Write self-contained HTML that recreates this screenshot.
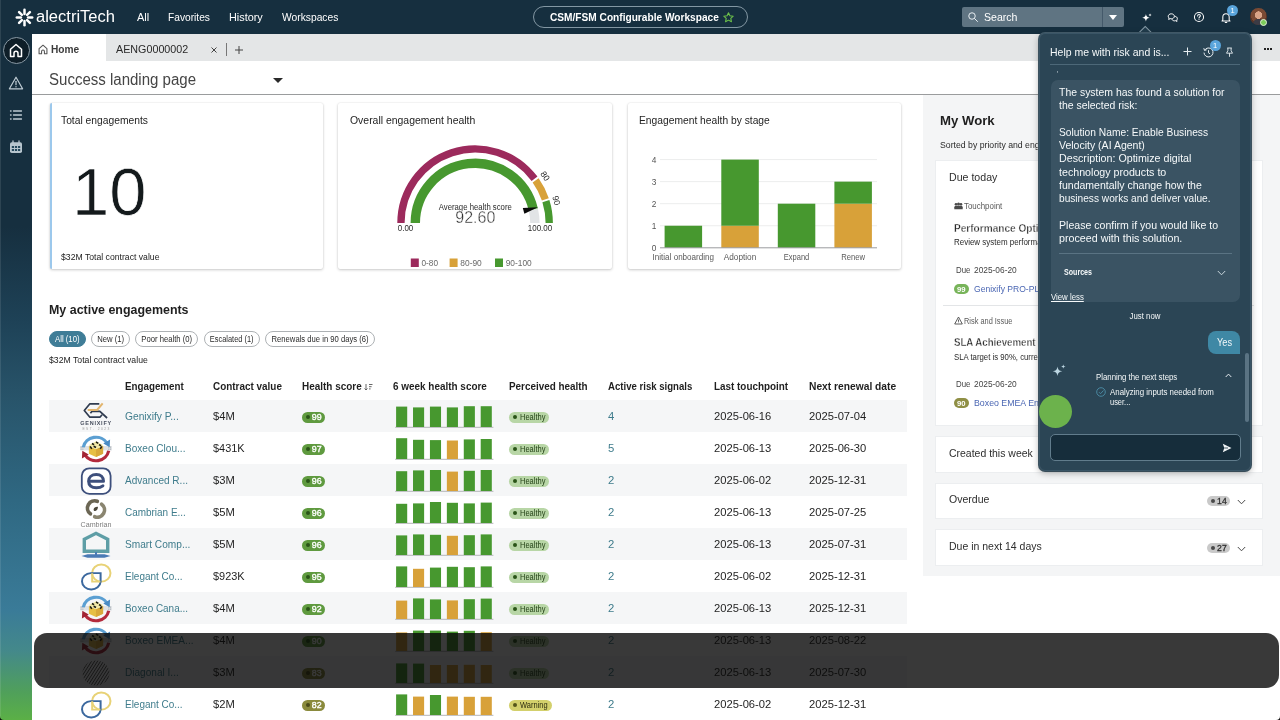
<!DOCTYPE html>
<html lang="en">
<head>
<meta charset="utf-8">
<title>Success landing page - CSM/FSM Configurable Workspace</title>
<style>
*{box-sizing:border-box;margin:0;padding:0}
html,body{width:1280px;height:720px;overflow:hidden;background:#fff}
body{font-family:"Liberation Sans","DejaVu Sans",sans-serif;color:#1c1c1c;position:relative;-webkit-font-smoothing:antialiased}
.abs{position:absolute}
.t{position:absolute;white-space:nowrap;line-height:20px;height:20px}
/* header */
#hdr{position:absolute;left:0;top:0;width:1280px;height:34px;background:#162f3f}
#side{position:absolute;left:0;top:34px;width:32px;height:686px;background:linear-gradient(180deg,#162f3f 0%,#162f3f 28%,#1e4257 42%,#28546a 53%,#2f6882 68%,#3a7b98 84%,#44898a 90%,#50a05a 96%,#5bb046 100%)}
#edge{position:absolute;left:0;top:0;width:1px;height:720px;background:rgba(255,255,255,.1)}
#tabs{position:absolute;left:32px;top:34px;width:1248px;height:27px;background:#e4e6e7}
#hometab{position:absolute;left:32px;top:34px;width:74px;height:27px;background:#fff}
#titlebar{position:absolute;left:32px;top:61px;width:1248px;height:34px;background:#fff;border-bottom:1px solid #9a9c9d}
.nav{color:#fff;font-size:11.5px}
/* cards */
.card{position:absolute;top:103px;width:274px;height:166px;background:#fff;box-shadow:0 1px 3px rgba(0,0,0,.2),0 0 1.5px rgba(0,0,0,.13);border-radius:2px}
.ctitle{position:absolute;font-size:11.5px;color:#1c1c1c;white-space:nowrap;line-height:1}
/* table */
.row{position:absolute;left:49px;width:858px;height:32px}
.row.g{background:#f5f6f7}
.lnk{color:#3f7c8c}
.cell{position:absolute;white-space:nowrap;line-height:1;font-size:11.5px;color:#1c1c1c}
.th{position:absolute;white-space:nowrap;line-height:1;font-size:11.2px;font-weight:bold;color:#1c1c1c;top:381px}
.hs{position:absolute;height:11px;width:23px;border-radius:6px;background:#5f9a3f;color:#fff;font-size:8px;font-weight:bold;line-height:11px;padding-left:11px}
.hs i{position:absolute;left:4px;top:3px;width:5px;height:5px;border-radius:50%;background:#274d17}
.ph{position:absolute;height:11px;border-radius:6px;background:#b9d7a8;color:#1f3d12;font-size:8.3px;line-height:11px;padding-left:12px;white-space:nowrap}
.ph i{position:absolute;left:4px;top:3px;width:5px;height:5px;border-radius:50%;background:#274d17}
.bars{position:absolute;left:346px;top:5px;width:98px;height:22px;border-bottom:1px solid #b9bbbd}
.bars b{position:absolute;bottom:0;width:11px;background:#4a9a2f}
.bars b.o{background:#dfa03a}
.pill{position:absolute;top:331px;height:16px;border:1px solid #adb1b4;border-radius:8px;font-size:8.3px;line-height:13px;color:#1c1c1c;text-align:center;white-space:nowrap;background:#fff}
/* right panel */
#rp{position:absolute;left:922px;top:95px;width:340px;height:483px;background:#f4f5f6}
.rcard{position:absolute;left:935.5px;width:326.5px;background:#fff;box-shadow:0 0 0 1px #eceef0}
/* chat */
#chat{position:absolute;left:1039px;top:33px;width:213px;height:438px;background:#2a4555;border-radius:6px;box-shadow:0 2px 8px rgba(0,0,0,.35);border:1px solid #3a5566}
.cw{color:#f2f5f7}
</style>
</head>
<body>
<div id="app" style="position:absolute;left:0;top:0;width:1280px;height:720px;overflow:hidden;will-change:transform">
<!-- ============ TOP HEADER ============ -->
<div id="hdr"></div>
<svg class="abs" style="left:15.2px;top:7.900px" width="19" height="19" viewBox="-9.5 -9.5 19 19">
<g stroke="#fff" stroke-width="2.500" stroke-linecap="round">
<line x1="0" y1="-3.600" x2="0" y2="-7.700"/><line x1="0" y1="3.600" x2="0" y2="7.700"/>
<line x1="-3.600" y1="0" x2="-7.700" y2="0"/><line x1="3.600" y1="0" x2="7.700" y2="0"/>
<line x1="-2.600" y1="-2.600" x2="-5.400" y2="-5.400"/><line x1="2.600" y1="2.600" x2="5.400" y2="5.400"/>
<line x1="-2.600" y1="2.600" x2="-5.400" y2="5.400"/><line x1="2.600" y1="-2.600" x2="5.400" y2="-5.400"/>
</g></svg>
<div class="t" style="top:7px;font-size:15.8px;left:36.0px;transform-origin:0 50%;transform:scaleX(1.046);color:#fff;">alectriTech</div>
<div class="t" style="top:7px;font-size:10.6px;left:137.3px;transform-origin:0 50%;transform:scaleX(1.036);color:#fff;">All</div>
<div class="t" style="top:7px;font-size:10.6px;left:168.4px;transform-origin:0 50%;transform:scaleX(0.963);color:#fff;">Favorites</div>
<div class="t" style="top:7px;font-size:10.6px;left:229.1px;transform-origin:0 50%;transform:scaleX(1.025);color:#fff;">History</div>
<div class="t" style="top:7px;font-size:10.6px;left:282.2px;transform-origin:0 50%;transform:scaleX(0.970);color:#fff;">Workspaces</div>
<div class="abs" style="left:532.500px;top:6px;width:215px;height:22px;border:1px solid #8397a3;border-radius:11px"></div>
<div class="t" style="top:8px;font-size:10.4px;left:549.5px;transform-origin:0 50%;transform:scaleX(0.976);font-weight:bold;color:#fff;">CSM/FSM Configurable Workspace</div>
<svg class="abs" style="left:722px;top:10.500px" width="13" height="13" viewBox="0 0 24 24"><path d="M12 3.200l2.600 5.600 6.100.8-4.500 4.200 1.200 6-5.400-3-5.400 3 1.200-6-4.500-4.200 6.100-.8z" fill="none" stroke="#6cc04a" stroke-width="2" stroke-linejoin="round"/></svg>
<div class="abs" style="left:962px;top:7px;width:162px;height:20px;background:#5f7482;border-radius:2px"></div>
<div class="abs" style="left:1102px;top:7px;width:1px;height:20px;background:#44596a"></div>
<svg class="abs" style="left:967px;top:11px" width="12" height="12" viewBox="0 0 24 24"><circle cx="10" cy="10" r="6.500" fill="none" stroke="#e8eef2" stroke-width="2"/><path d="M15 15l6 6" stroke="#e8eef2" stroke-width="2" stroke-linecap="round"/></svg>
<div class="t" style="top:7px;font-size:10.8px;left:984.0px;transform-origin:0 50%;transform:scaleX(0.979);color:#fff;">Search</div>
<div class="abs" style="left:1109px;top:15px;width:0;height:0;border-left:4px solid transparent;border-right:4px solid transparent;border-top:5px solid #fff"></div>
<svg class="abs" style="left:1140.500px;top:11.500px" width="11.500" height="11.500" viewBox="0 0 14 14"><path d="M6 2.500C6.500 5.500 7.500 6.500 10.500 7 7.500 7.500 6.500 8.500 6 11.500 5.500 8.500 4.500 7.500 1.500 7 4.500 6.500 5.500 5.500 6 2.500z" fill="#fff"/><path d="M11 1.500c.2 1.300.7 1.800 2 2-1.300.2-1.800.7-2 2-.2-1.300-.7-1.800-2-2 1.300-.2 1.800-.7 2-2z" fill="#fff"/></svg>
<svg class="abs" style="left:1167.200px;top:12.200px" width="11.600" height="11.600" viewBox="0 0 14 14" fill="none" stroke="#fff" stroke-width="1.200"><path d="M5.200 2.200c2.100 0 3.700 1.300 3.700 3s-1.600 3-3.700 3c-.5 0-1-.1-1.400-.2L2 9l.5-1.700C1.900 6.700 1.500 6 1.500 5.200c0-1.700 1.600-3 3.700-3z"/><path d="M9.300 5.200c1.800.1 3.200 1.300 3.200 2.800 0 .7-.3 1.300-.8 1.800l.4 1.600-1.700-.9c-.4.100-.8.200-1.200.2-1.500 0-2.800-.8-3.300-1.900"/></svg>
<svg class="abs" style="left:1193px;top:11px" width="12" height="12" viewBox="0 0 14 14" fill="none" stroke="#fff" stroke-width="1.200"><circle cx="7" cy="7" r="5.300"/><path d="M5.400 5.700c0-.9.700-1.600 1.600-1.600s1.600.6 1.600 1.500c0 1.200-1.600 1.300-1.600 2.600" stroke-linecap="round"/><circle cx="7" cy="10" r=".6" fill="#fff" stroke="none"/></svg>
<svg class="abs" style="left:1220px;top:11px" width="12" height="12.900" viewBox="0 0 14 15" fill="none" stroke="#fff" stroke-width="1.200"><path d="M3.300 10.500V7c0-2.200 1.600-3.900 3.700-3.900s3.700 1.700 3.700 3.900v3.500l1 1.200H2.300z" stroke-linejoin="round"/><path d="M5.800 12.800c.3.500.7.700 1.200.7s.9-.2 1.200-.7"/></svg>
<div class="abs" style="left:1227px;top:5px;width:11px;height:11px;border-radius:50%;background:#5aa5dc;color:#fff;font-size:7.500px;line-height:11px;text-align:center">1</div>
<div class="abs" style="left:1250px;top:8.300px;width:16.600px;height:16.600px;border-radius:50%;background:radial-gradient(circle at 50% 42%,#d9a488 0 28%,#7a4a34 30% 58%,#5a3324 60%);overflow:hidden"><div class="abs" style="left:3px;top:11px;width:11px;height:8px;border-radius:5px 5px 0 0;background:#3b3b45"></div></div>
<div class="abs" style="left:1259.700px;top:18.800px;width:7px;height:7px;border-radius:50%;background:#7ccc5a;border:1px solid #dff0d5"></div>
<!-- ============ LEFT SIDEBAR ============ -->
<div id="side"></div>
<div id="edge"></div>
<div class="abs" style="left:2.500px;top:37px;width:27px;height:27px;border-radius:50%;background:#0e1e28;border:1px solid #8a9aa5"></div>
<svg class="abs" style="left:9px;top:43px" width="14" height="15" viewBox="0 0 14 15" fill="none" stroke="#fff" stroke-width="1.500" stroke-linejoin="round"><path d="M1.500 6.300L7 1.500l5.500 4.800v7.200H9v-3.200c0-1.100-.9-2-2-2s-2 .9-2 2v3.200H1.500z"/></svg>
<svg class="abs" style="left:8px;top:74.500px" width="16" height="16" viewBox="0 0 16 16" fill="none" stroke="#bfccd4" stroke-width="1.200" stroke-linejoin="round"><path d="M8 2.200L14.600 13.800H1.400z"/><path d="M8 6.300v3.400" stroke-linecap="round"/><circle cx="8" cy="11.700" r=".7" fill="#bfccd4" stroke="none"/></svg>
<svg class="abs" style="left:9px;top:108px" width="14" height="14" viewBox="0 0 14 14" stroke="#bfccd4" stroke-width="1.300" stroke-linecap="round"><path d="M4.500 3h8M4.500 7h8M4.500 11h8"/><path d="M1.500 3h.6M1.500 7h.6M1.500 11h.6"/></svg>
<svg class="abs" style="left:9px;top:140px" width="14" height="14" viewBox="0 0 14 14"><rect x="1" y="2.200" width="12" height="10.800" rx="1.800" fill="#b7c5ce"/><path d="M4 .8v2.500M10 .8v2.500" stroke="#b7c5ce" stroke-width="1.300" stroke-linecap="round"/><g fill="#24485c"><rect x="2.800" y="6" width="2.200" height="2"/><rect x="5.900" y="6" width="2.200" height="2"/><rect x="9" y="6" width="2.200" height="2"/><rect x="2.800" y="9" width="2.200" height="2"/><rect x="5.900" y="9" width="2.200" height="2"/><rect x="9" y="9" width="2.200" height="2"/></g></svg>
<!-- ============ TAB BAR ============ -->
<div id="tabs"></div>
<div id="hometab"></div>
<svg class="abs" style="left:38px;top:43.500px" width="10" height="11" viewBox="0 0 14 15" fill="none" stroke="#555" stroke-width="1.500" stroke-linejoin="round"><path d="M1.500 6.300L7 1.500l5.500 4.800v7.200H9v-3.200c0-1.100-.9-2-2-2s-2 .9-2 2v3.200H1.500z"/></svg>
<div class="t" style="top:40px;font-size:10.3px;left:50.8px;transform-origin:0 50%;transform:scaleX(0.985);font-weight:bold;color:#3c3c3c;">Home</div>
<div class="t" style="top:39px;font-size:10.6px;left:116.0px;transform-origin:0 50%;transform:scaleX(1.014);color:#2a2a2a;">AENG0000002</div>
<svg class="abs" style="left:209.500px;top:45.500px" width="8" height="8" viewBox="0 0 8 8" stroke="#444" stroke-width="1"><path d="M1.500 1.500l5 5M6.500 1.500l-5 5"/></svg>
<div class="abs" style="left:226px;top:43px;width:1px;height:13px;background:#777"></div>
<svg class="abs" style="left:234px;top:44.500px" width="10" height="10" viewBox="0 0 10 10" stroke="#444" stroke-width="1"><path d="M5 1v8M1 5h8"/></svg>
<div class="abs" style="left:1264px;top:48px;width:2px;height:2px;background:#222;box-shadow:3px 0 0 #222,6px 0 0 #222"></div>
<!-- ============ TITLE BAR ============ -->
<div id="titlebar"></div>
<div class="t" style="top:70px;font-size:16px;left:48.5px;transform-origin:0 50%;transform:scaleX(0.939);color:#454545;">Success landing page</div>
<div class="abs" style="left:272.500px;top:77.500px;width:0;height:0;border-left:5px solid transparent;border-right:5px solid transparent;border-top:5px solid #2a2a2a"></div>
<!-- ============ KPI CARDS ============ -->
<div class="card" id="c1" style="left:50px;width:272.600px;border-left:2.500px solid #9cc8ec"></div>
<div class="card" id="c2" style="left:338px;width:273.600px"></div>
<div class="card" id="c3" style="left:628px;width:273.300px"></div>
<div class="t" style="top:110px;font-size:11.6px;left:60.5px;transform-origin:0 50%;transform:scaleX(0.888);color:#232323;">Total engagements</div>
<div class="t" style="top:182px;font-size:67.5px;left:72.0px;transform-origin:0 50%;transform:scaleX(0.992);color:#141a1c;-webkit-text-stroke:.7px #fff;">10</div>
<div class="t" style="top:247px;font-size:9.3px;left:60.5px;transform-origin:0 50%;transform:scaleX(0.931);color:#232323;">$32M Total contract value</div>
<div class="t" style="top:110px;font-size:11.6px;left:349.5px;transform-origin:0 50%;transform:scaleX(0.900);color:#232323;">Overall engagement health</div>
<div class="t" style="top:110px;font-size:11.6px;left:639.3px;transform-origin:0 50%;transform:scaleX(0.886);color:#232323;">Engagement health by stage</div>
<svg class="abs" style="left:338px;top:103px;font-family:'Liberation Sans',sans-serif" width="274" height="166" viewBox="338 103 274 166">
<path d="M400.95 223.10A74.15 74.15 0 0 1 534.54 178.77" fill="none" stroke="#9c2a5c" stroke-width="7.300"/>
<path d="M535.63 180.27A74.15 74.15 0 0 1 545.33 199.30" fill="none" stroke="#d8a139" stroke-width="7.300"/>
<path d="M545.90 201.07A74.15 74.15 0 0 1 549.25 223.10" fill="none" stroke="#47982f" stroke-width="7.300"/>
<path d="M533.29 209.32A59.8 59.8 0 0 1 534.90 223.10" fill="none" stroke="#e2e4e6" stroke-width="9.400"/>
<path d="M415.30 223.10A59.8 59.8 0 0 1 533.29 209.32" fill="none" stroke="#47982f" stroke-width="9.400"/>
<path d="M522.800 208L537.800 207.200L524.400 213.700z" fill="#0a0a0a"/>
<text x="475.3" y="210" font-size="8.4" fill="#2a2a2a" text-anchor="middle" textLength="73" lengthAdjust="spacingAndGlyphs">Average health score</text>
<text x="475.3" y="223.2" font-size="16" fill="#2f2f2f" text-anchor="middle" textLength="40" lengthAdjust="spacingAndGlyphs" stroke="#fff" stroke-width=".35">92.60</text>
<text x="397.8" y="231.2" font-size="8.3" fill="#2a2a2a" text-anchor="start" textLength="15.5" lengthAdjust="spacingAndGlyphs">0.00</text>
<text x="527.8" y="231.2" font-size="8.3" fill="#2a2a2a" text-anchor="start" textLength="24.4" lengthAdjust="spacingAndGlyphs">100.00</text>
<text font-size="8.600" fill="#2a2a2a" text-anchor="middle" transform="translate(542.700,177.800) rotate(56)" textLength="9.500" lengthAdjust="spacingAndGlyphs">80</text>
<text font-size="8.600" fill="#2a2a2a" text-anchor="middle" transform="translate(553.500,201.200) rotate(74)" textLength="9.500" lengthAdjust="spacingAndGlyphs">90</text>
<rect x="410.8" y="258.500" width="8" height="8.500" fill="#9c2a5c"/>
<text x="421.5" y="265.8" font-size="8.6" fill="#6a6a6a" text-anchor="start" textLength="16.5" lengthAdjust="spacingAndGlyphs">0-80</text>
<rect x="449.6" y="258.500" width="8" height="8.500" fill="#d8a139"/>
<text x="460.3" y="265.8" font-size="8.6" fill="#6a6a6a" text-anchor="start" textLength="21.5" lengthAdjust="spacingAndGlyphs">80-90</text>
<rect x="495" y="258.500" width="8" height="8.500" fill="#47982f"/>
<text x="505.7" y="265.8" font-size="8.6" fill="#6a6a6a" text-anchor="start" textLength="26" lengthAdjust="spacingAndGlyphs">90-100</text>
</svg>
<svg class="abs" style="left:627px;top:103px;font-family:'Liberation Sans',sans-serif" width="274" height="166" viewBox="627 103 274 166">
<path d="M660 225.75H877" stroke="#eceded" stroke-width="1"/>
<path d="M660 203.70H877" stroke="#eceded" stroke-width="1"/>
<path d="M660 181.65H877" stroke="#eceded" stroke-width="1"/>
<path d="M660 159.60H877" stroke="#eceded" stroke-width="1"/>
<text x="656.300" y="250.80" font-size="8.300" fill="#555" text-anchor="end">0</text>
<text x="656.300" y="228.75" font-size="8.300" fill="#555" text-anchor="end">1</text>
<text x="656.300" y="206.70" font-size="8.300" fill="#555" text-anchor="end">2</text>
<text x="656.300" y="184.65" font-size="8.300" fill="#555" text-anchor="end">3</text>
<text x="656.300" y="162.60" font-size="8.300" fill="#555" text-anchor="end">4</text>
<rect x="664.6" y="225.75" width="37.500" height="22.05" fill="#47982f"/>
<rect x="721.3" y="225.75" width="37.500" height="22.05" fill="#d8a139"/>
<rect x="721.3" y="159.60" width="37.500" height="66.15" fill="#47982f"/>
<rect x="777.8" y="203.70" width="37.500" height="44.10" fill="#47982f"/>
<rect x="834.4" y="203.70" width="37.500" height="44.10" fill="#d8a139"/>
<rect x="834.4" y="181.65" width="37.500" height="22.05" fill="#47982f"/>
<path d="M660 247.8H877" stroke="#9a9c9e" stroke-width="1"/>
<text x="683.3" y="259.8" font-size="8.5" fill="#5a5a5a" text-anchor="middle" textLength="61.5" lengthAdjust="spacingAndGlyphs">Initial onboarding</text>
<text x="740" y="259.8" font-size="8.5" fill="#5a5a5a" text-anchor="middle" textLength="32.5" lengthAdjust="spacingAndGlyphs">Adoption</text>
<text x="796.5" y="259.8" font-size="8.5" fill="#5a5a5a" text-anchor="middle" textLength="25.5" lengthAdjust="spacingAndGlyphs">Expand</text>
<text x="853.2" y="259.8" font-size="8.5" fill="#5a5a5a" text-anchor="middle" textLength="24" lengthAdjust="spacingAndGlyphs">Renew</text>
</svg>
<!-- ============ MY ACTIVE ENGAGEMENTS ============ -->
<div class="t" style="top:300px;font-size:13.7px;left:49.0px;transform-origin:0 50%;transform:scaleX(0.908);font-weight:bold;color:#1f1f1f;">My active engagements</div>
<div class="pill" style="left:48.6px;width:37.0px;background:#3f7d97;border-color:#3f7d97;"></div>
<div class="t" style="top:329px;font-size:8.4px;left:53.8px;transform-origin:50% 50%;transform:scaleX(0.925);color:#fff;">All (10)</div>
<div class="pill" style="left:90.5px;width:39.4px;"></div>
<div class="t" style="top:329px;font-size:8.4px;left:95.5px;transform-origin:50% 50%;transform:scaleX(0.918);color:#2a2a2a;">New (1)</div>
<div class="pill" style="left:135.1px;width:63.3px;"></div>
<div class="t" style="top:329px;font-size:8.4px;left:139.0px;transform-origin:50% 50%;transform:scaleX(0.916);color:#2a2a2a;">Poor health (0)</div>
<div class="pill" style="left:203.7px;width:56.3px;"></div>
<div class="t" style="top:329px;font-size:8.4px;left:207.1px;transform-origin:50% 50%;transform:scaleX(0.887);color:#2a2a2a;">Escalated (1)</div>
<div class="pill" style="left:264.9px;width:109.7px;"></div>
<div class="t" style="top:329px;font-size:8.4px;left:266.5px;transform-origin:50% 50%;transform:scaleX(0.914);color:#2a2a2a;">Renewals due in 90 days (6)</div>
<div class="t" style="top:350px;font-size:9.3px;left:49.0px;transform-origin:0 50%;transform:scaleX(0.934);color:#232323;">$32M Total contract value</div>
<div class="t" style="top:376px;font-size:11.2px;left:124.9px;transform-origin:0 50%;transform:scaleX(0.875);font-weight:bold;color:#1f1f1f;">Engagement</div>
<div class="t" style="top:376px;font-size:11.2px;left:212.5px;transform-origin:0 50%;transform:scaleX(0.887);font-weight:bold;color:#1f1f1f;">Contract value</div>
<div class="t" style="top:376px;font-size:11.2px;left:301.8px;transform-origin:0 50%;transform:scaleX(0.889);font-weight:bold;color:#1f1f1f;">Health score</div>
<div class="t" style="top:376px;font-size:11.2px;left:392.6px;transform-origin:0 50%;transform:scaleX(0.888);font-weight:bold;color:#1f1f1f;">6 week health score</div>
<div class="t" style="top:376px;font-size:11.2px;left:508.7px;transform-origin:0 50%;transform:scaleX(0.884);font-weight:bold;color:#1f1f1f;">Perceived health</div>
<div class="t" style="top:376px;font-size:11.2px;left:608.2px;transform-origin:0 50%;transform:scaleX(0.858);font-weight:bold;color:#1f1f1f;">Active risk signals</div>
<div class="t" style="top:376px;font-size:11.2px;left:714.0px;transform-origin:0 50%;transform:scaleX(0.883);font-weight:bold;color:#1f1f1f;">Last touchpoint</div>
<div class="t" style="top:376px;font-size:11.2px;left:808.6px;transform-origin:0 50%;transform:scaleX(0.916);font-weight:bold;color:#1f1f1f;">Next renewal date</div>
<svg class="abs" style="left:363.500px;top:383px" width="9" height="8" viewBox="0 0 9 8" stroke="#555" stroke-width=".9" fill="none"><path d="M2 1v6M.5 5.500L2 7l1.500-1.500M5 1.500h3.500M5 3.700h2.600M5 5.900h1.600"/></svg>
<div class="row g" style="top:400.4px"></div>
<svg class="abs" style="left:76px;top:398.0px;font-family:'Liberation Sans',sans-serif" width="40" height="36" viewBox="0 0 40 36">
<path d="M23.300 5.800H13.900L8.300 12.500l5.600 6.700h10l2.200-2.500" fill="none" stroke="#2f3b4f" stroke-width="1.700" stroke-linejoin="round"/>
<path d="M14.400 15.200l1.600-1.800h7.900l7.200 6.600" fill="none" stroke="#2f3b4f" stroke-width="1.700" stroke-linejoin="round"/>
<path d="M11.700 12h9.400l5.600-6.700" fill="none" stroke="#e2b56e" stroke-width="2" stroke-linejoin="round"/>
<text x="4.200" y="27.200" font-size="5.500" font-weight="bold" fill="#474e5e" textLength="31" lengthAdjust="spacing">GENIXIFY</text>
<text x="6.400" y="31.800" font-size="3.300" fill="#a0a0a0" textLength="27" lengthAdjust="spacing">EST. 2023</text>
</svg>
<div class="t" style="top:406px;font-size:11.4px;left:124.9px;transform-origin:0 50%;transform:scaleX(0.897);color:#3f7c8c;">Genixify P...</div>
<div class="t" style="top:406px;font-size:11.4px;left:212.5px;transform-origin:0 50%;transform:scaleX(0.983);color:#1f1f1f;">$4M</div>
<div class="abs" style="left:301.600px;top:411.6px;width:23px;height:11px;border-radius:6px;background:#5f9a3f"></div>
<div class="abs" style="left:305.500px;top:414.9px;width:4.600px;height:4.600px;border-radius:50%;background:#2a5418"></div>
<div class="t" style="top:407px;font-size:8.8px;left:311.8px;transform-origin:0 50%;color:#fff;-webkit-text-stroke:.35px #fff;">99</div>
<svg class="abs" style="left:394px;top:400.8px" width="101" height="32" viewBox="394 0 101 32"><rect x="395.200" y="25.8" width="98.200" height="1" fill="#b3b5b7"/><rect x="396.10" y="5.6" width="11.100" height="20.4" fill="#47982f"/><rect x="413.02" y="6.4" width="11.100" height="19.6" fill="#47982f"/><rect x="429.94" y="5.6" width="11.100" height="20.4" fill="#47982f"/><rect x="446.86" y="6.4" width="11.100" height="19.6" fill="#47982f"/><rect x="463.78" y="5.2" width="11.100" height="20.8" fill="#47982f"/><rect x="480.70" y="5.2" width="11.100" height="20.8" fill="#47982f"/></svg>
<div class="abs" style="left:508.800px;top:411.6px;width:40.7px;height:11px;border-radius:6px;background:#b8d6a6"></div>
<div class="abs" style="left:512.800px;top:414.9px;width:4.600px;height:4.600px;border-radius:50%;background:#2a5418"></div>
<div class="t" style="top:407px;font-size:9.3px;left:519.6px;transform-origin:0 50%;transform:scaleX(0.809);color:#1f3d12;">Healthy</div>
<div class="t" style="top:406px;font-size:11.4px;left:608.2px;transform-origin:0 50%;transform:scaleX(0.994);color:#3f7c8c;">4</div>
<div class="t" style="top:406px;font-size:11.4px;left:714.0px;transform-origin:0 50%;transform:scaleX(0.983);color:#1f1f1f;">2025-06-16</div>
<div class="t" style="top:406px;font-size:11.4px;left:808.6px;transform-origin:0 50%;transform:scaleX(0.983);color:#1f1f1f;">2025-07-04</div>
<div class="row" style="top:432.4px"></div>
<svg class="abs" style="left:79px;top:433.8px" width="34" height="29.700" viewBox="0 0 32 28">
<rect x="1" y="11.300" width="30" height="4.200" fill="#dfe2e5"/>
<path d="M1.500 12.400h3M1.500 14.300h3M27.500 12.400h3M27.500 14.300h3" stroke="#9aa0a6" stroke-width=".8" stroke-dasharray="1 .6"/>
<path d="M4 12.500A12.300 11.800 0 0 1 26.600 8.800" fill="none" stroke="#5b9fd2" stroke-width="3"/>
<path d="M29.300 5.200l-.4 7.300-6-3.600z" fill="#4a8bc4"/>
<path d="M28 15.800A12.300 11.800 0 0 1 5.400 19.500" fill="none" stroke="#b32a3c" stroke-width="3"/>
<path d="M2.700 23l.4-7.300 6 3.600z" fill="#a22333"/>
<path d="M16 14.200l6.700-2.700v7.200L16 21.800l-6.700-3.100v-7.200z" fill="#e6bf45"/>
<path d="M16 14.200l6.700-2.700v7.200L16 21.800z" fill="#d9a93a"/>
<path d="M16 6.800l7 3.700-7 3.900-7-3.900z" fill="#f2e9a8"/>
<path d="M12.200 9l2 1.100M16 7.600l2.200 1.200M18.800 10l2 1.100M13.800 11.600l2.200 1.200M10.500 11.700l1.500 2.300M21.500 11.700l-1.500 2.300" stroke="#1a1a12" stroke-width="1.500"/>
</svg>
<div class="t" style="top:438px;font-size:11.4px;left:124.9px;transform-origin:0 50%;transform:scaleX(0.884);color:#3f7c8c;">Boxeo Clou...</div>
<div class="t" style="top:438px;font-size:11.4px;left:212.5px;transform-origin:0 50%;transform:scaleX(0.959);color:#1f1f1f;">$431K</div>
<div class="abs" style="left:301.600px;top:443.6px;width:23px;height:11px;border-radius:6px;background:#5f9a3f"></div>
<div class="abs" style="left:305.500px;top:446.9px;width:4.600px;height:4.600px;border-radius:50%;background:#2a5418"></div>
<div class="t" style="top:439px;font-size:8.8px;left:311.8px;transform-origin:0 50%;color:#fff;-webkit-text-stroke:.35px #fff;">97</div>
<svg class="abs" style="left:394px;top:432.8px" width="101" height="32" viewBox="394 0 101 32"><rect x="395.200" y="25.8" width="98.200" height="1" fill="#b3b5b7"/><rect x="396.10" y="5.2" width="11.100" height="20.8" fill="#47982f"/><rect x="413.02" y="6.8" width="11.100" height="19.2" fill="#47982f"/><rect x="429.94" y="7.1" width="11.100" height="18.9" fill="#47982f"/><rect x="446.86" y="7.5" width="11.100" height="18.5" fill="#d8a139"/><rect x="463.78" y="6.4" width="11.100" height="19.6" fill="#47982f"/><rect x="480.70" y="6.0" width="11.100" height="20.0" fill="#47982f"/></svg>
<div class="abs" style="left:508.800px;top:443.6px;width:40.7px;height:11px;border-radius:6px;background:#b8d6a6"></div>
<div class="abs" style="left:512.800px;top:446.9px;width:4.600px;height:4.600px;border-radius:50%;background:#2a5418"></div>
<div class="t" style="top:439px;font-size:9.3px;left:519.6px;transform-origin:0 50%;transform:scaleX(0.809);color:#1f3d12;">Healthy</div>
<div class="t" style="top:438px;font-size:11.4px;left:608.2px;transform-origin:0 50%;transform:scaleX(0.994);color:#3f7c8c;">5</div>
<div class="t" style="top:438px;font-size:11.4px;left:714.0px;transform-origin:0 50%;transform:scaleX(0.983);color:#1f1f1f;">2025-06-13</div>
<div class="t" style="top:438px;font-size:11.4px;left:808.6px;transform-origin:0 50%;transform:scaleX(0.983);color:#1f1f1f;">2025-06-30</div>
<div class="row g" style="top:464.4px"></div>
<svg class="abs" style="left:80px;top:466.8px" width="32" height="28" viewBox="0 0 32 28">
<rect x="1.800" y="1.300" width="28.800" height="25.600" rx="7.500" fill="#fff" stroke="#3d4f7c" stroke-width="1.800"/>
<path d="M9 14.300h14.500c0-4.200-2.700-6.800-7.200-6.800S8.600 10.200 8.600 14.200s2.900 6.600 7.700 6.600c2.700 0 5-.7 6.600-2" fill="none" stroke="#3d4f7c" stroke-width="3" stroke-linejoin="round" stroke-linecap="round"/>
</svg>
<div class="t" style="top:470px;font-size:11.4px;left:124.9px;transform-origin:0 50%;transform:scaleX(0.880);color:#3f7c8c;">Advanced R...</div>
<div class="t" style="top:470px;font-size:11.4px;left:212.5px;transform-origin:0 50%;transform:scaleX(0.983);color:#1f1f1f;">$3M</div>
<div class="abs" style="left:301.600px;top:475.6px;width:23px;height:11px;border-radius:6px;background:#5f9a3f"></div>
<div class="abs" style="left:305.500px;top:478.9px;width:4.600px;height:4.600px;border-radius:50%;background:#2a5418"></div>
<div class="t" style="top:471px;font-size:8.8px;left:311.8px;transform-origin:0 50%;color:#fff;-webkit-text-stroke:.35px #fff;">96</div>
<svg class="abs" style="left:394px;top:464.8px" width="101" height="32" viewBox="394 0 101 32"><rect x="395.200" y="25.8" width="98.200" height="1" fill="#b3b5b7"/><rect x="396.10" y="6.2" width="11.100" height="19.8" fill="#47982f"/><rect x="413.02" y="5.4" width="11.100" height="20.6" fill="#47982f"/><rect x="429.94" y="5.0" width="11.100" height="21" fill="#47982f"/><rect x="446.86" y="6.6" width="11.100" height="19.4" fill="#d8a139"/><rect x="463.78" y="5.8" width="11.100" height="20.2" fill="#47982f"/><rect x="480.70" y="5.0" width="11.100" height="21" fill="#47982f"/></svg>
<div class="abs" style="left:508.800px;top:475.6px;width:40.7px;height:11px;border-radius:6px;background:#b8d6a6"></div>
<div class="abs" style="left:512.800px;top:478.9px;width:4.600px;height:4.600px;border-radius:50%;background:#2a5418"></div>
<div class="t" style="top:471px;font-size:9.3px;left:519.6px;transform-origin:0 50%;transform:scaleX(0.809);color:#1f3d12;">Healthy</div>
<div class="t" style="top:470px;font-size:11.4px;left:608.2px;transform-origin:0 50%;transform:scaleX(0.994);color:#3f7c8c;">2</div>
<div class="t" style="top:470px;font-size:11.4px;left:714.0px;transform-origin:0 50%;transform:scaleX(0.983);color:#1f1f1f;">2025-06-02</div>
<div class="t" style="top:470px;font-size:11.4px;left:808.6px;transform-origin:0 50%;transform:scaleX(0.983);color:#1f1f1f;">2025-12-31</div>
<div class="row" style="top:496.4px"></div>
<svg class="abs" style="left:79px;top:496.8px;font-family:'Liberation Sans',sans-serif" width="34" height="32" viewBox="0 0 34 32">
<path d="M18.300 4.300a7.200 7.200 0 0 0-6.900 12.500" fill="none" stroke="#6b6654" stroke-width="3.700" stroke-linecap="round"/>
<path d="M15.700 19.700a7.200 7.200 0 0 0 6.900-12.500" fill="none" stroke="#8a8570" stroke-width="3.700" stroke-linecap="round"/>
<path d="M14.600 12.400c.3-1.800 1.900-2.700 4.400-2.500-.2 2.300-1.100 3.700-2.700 4-1.100.2-1.900-.5-1.700-1.500z" fill="#4a463a"/>
<text x="17" y="29.600" font-size="7.600" fill="#7c7c7c" text-anchor="middle" textLength="31" lengthAdjust="spacingAndGlyphs">Cambrian</text>
</svg>
<div class="t" style="top:502px;font-size:11.4px;left:124.9px;transform-origin:0 50%;transform:scaleX(0.874);color:#3f7c8c;">Cambrian E...</div>
<div class="t" style="top:502px;font-size:11.4px;left:212.5px;transform-origin:0 50%;transform:scaleX(0.983);color:#1f1f1f;">$5M</div>
<div class="abs" style="left:301.600px;top:507.6px;width:23px;height:11px;border-radius:6px;background:#5f9a3f"></div>
<div class="abs" style="left:305.500px;top:510.9px;width:4.600px;height:4.600px;border-radius:50%;background:#2a5418"></div>
<div class="t" style="top:503px;font-size:8.8px;left:311.8px;transform-origin:0 50%;color:#fff;-webkit-text-stroke:.35px #fff;">96</div>
<svg class="abs" style="left:394px;top:496.8px" width="101" height="32" viewBox="394 0 101 32"><rect x="395.200" y="25.8" width="98.200" height="1" fill="#b3b5b7"/><rect x="396.10" y="6.8" width="11.100" height="19.2" fill="#47982f"/><rect x="413.02" y="6.4" width="11.100" height="19.6" fill="#47982f"/><rect x="429.94" y="5.0" width="11.100" height="21" fill="#47982f"/><rect x="446.86" y="5.8" width="11.100" height="20.2" fill="#47982f"/><rect x="463.78" y="6.4" width="11.100" height="19.6" fill="#47982f"/><rect x="480.70" y="5.6" width="11.100" height="20.4" fill="#47982f"/></svg>
<div class="abs" style="left:508.800px;top:507.6px;width:40.7px;height:11px;border-radius:6px;background:#b8d6a6"></div>
<div class="abs" style="left:512.800px;top:510.9px;width:4.600px;height:4.600px;border-radius:50%;background:#2a5418"></div>
<div class="t" style="top:503px;font-size:9.3px;left:519.6px;transform-origin:0 50%;transform:scaleX(0.809);color:#1f3d12;">Healthy</div>
<div class="t" style="top:502px;font-size:11.4px;left:608.2px;transform-origin:0 50%;transform:scaleX(0.994);color:#3f7c8c;">2</div>
<div class="t" style="top:502px;font-size:11.4px;left:714.0px;transform-origin:0 50%;transform:scaleX(0.983);color:#1f1f1f;">2025-06-13</div>
<div class="t" style="top:502px;font-size:11.4px;left:808.6px;transform-origin:0 50%;transform:scaleX(0.983);color:#1f1f1f;">2025-07-25</div>
<div class="row g" style="top:528.4px"></div>
<svg class="abs" style="left:80px;top:530.8px" width="32" height="28" viewBox="0 0 32 28">
<path d="M4.300 20.300V8.200L16 2.300l11.700 5.900v12.100z" fill="none" stroke="#5e9ea6" stroke-width="3.400" stroke-linejoin="miter"/>
<path d="M16 21v3" stroke="#4a7ab5" stroke-width="2"/>
<path d="M1.500 25l6-1.800h17l6 1.800-6 1.800h-17z" fill="#4a7ab5"/>
</svg>
<div class="t" style="top:534px;font-size:11.4px;left:124.9px;transform-origin:0 50%;transform:scaleX(0.890);color:#3f7c8c;">Smart Comp...</div>
<div class="t" style="top:534px;font-size:11.4px;left:212.5px;transform-origin:0 50%;transform:scaleX(0.983);color:#1f1f1f;">$5M</div>
<div class="abs" style="left:301.600px;top:539.6px;width:23px;height:11px;border-radius:6px;background:#5f9a3f"></div>
<div class="abs" style="left:305.500px;top:542.9px;width:4.600px;height:4.600px;border-radius:50%;background:#2a5418"></div>
<div class="t" style="top:535px;font-size:8.8px;left:311.8px;transform-origin:0 50%;color:#fff;-webkit-text-stroke:.35px #fff;">96</div>
<svg class="abs" style="left:394px;top:528.8px" width="101" height="32" viewBox="394 0 101 32"><rect x="395.200" y="25.8" width="98.200" height="1" fill="#b3b5b7"/><rect x="396.10" y="6.4" width="11.100" height="19.6" fill="#47982f"/><rect x="413.02" y="5.4" width="11.100" height="20.6" fill="#47982f"/><rect x="429.94" y="5.8" width="11.100" height="20.2" fill="#47982f"/><rect x="446.86" y="6.8" width="11.100" height="19.2" fill="#d8a139"/><rect x="463.78" y="6.2" width="11.100" height="19.8" fill="#47982f"/><rect x="480.70" y="5.4" width="11.100" height="20.6" fill="#47982f"/></svg>
<div class="abs" style="left:508.800px;top:539.6px;width:40.7px;height:11px;border-radius:6px;background:#b8d6a6"></div>
<div class="abs" style="left:512.800px;top:542.9px;width:4.600px;height:4.600px;border-radius:50%;background:#2a5418"></div>
<div class="t" style="top:535px;font-size:9.3px;left:519.6px;transform-origin:0 50%;transform:scaleX(0.809);color:#1f3d12;">Healthy</div>
<div class="t" style="top:534px;font-size:11.4px;left:608.2px;transform-origin:0 50%;transform:scaleX(0.994);color:#3f7c8c;">2</div>
<div class="t" style="top:534px;font-size:11.4px;left:714.0px;transform-origin:0 50%;transform:scaleX(0.983);color:#1f1f1f;">2025-06-13</div>
<div class="t" style="top:534px;font-size:11.4px;left:808.6px;transform-origin:0 50%;transform:scaleX(0.983);color:#1f1f1f;">2025-07-31</div>
<div class="row" style="top:560.4px"></div>
<svg class="abs" style="left:80px;top:562.6px" width="32" height="28" viewBox="0 0 32 30" preserveAspectRatio="none">
<circle cx="21.300" cy="10.800" r="9.200" fill="none" stroke="#e8d276" stroke-width="2"/>
<path d="M10.800 10.800h9.800v9.300a9.300 8.800 0 1 1-9.800-9.300z" fill="none" stroke="#3b689e" stroke-width="2"/>
<path d="M12.200 11v9h8.200" fill="none" stroke="#e8d276" stroke-width="2"/>
</svg>
<div class="t" style="top:566px;font-size:11.4px;left:124.9px;transform-origin:0 50%;transform:scaleX(0.875);color:#3f7c8c;">Elegant Co...</div>
<div class="t" style="top:566px;font-size:11.4px;left:212.5px;transform-origin:0 50%;transform:scaleX(0.959);color:#1f1f1f;">$923K</div>
<div class="abs" style="left:301.600px;top:571.6px;width:23px;height:11px;border-radius:6px;background:#5f9a3f"></div>
<div class="abs" style="left:305.500px;top:574.9px;width:4.600px;height:4.600px;border-radius:50%;background:#2a5418"></div>
<div class="t" style="top:567px;font-size:8.8px;left:311.8px;transform-origin:0 50%;color:#fff;-webkit-text-stroke:.35px #fff;">95</div>
<svg class="abs" style="left:394px;top:560.8px" width="101" height="32" viewBox="394 0 101 32"><rect x="395.200" y="25.8" width="98.200" height="1" fill="#b3b5b7"/><rect x="396.10" y="5.4" width="11.100" height="20.6" fill="#47982f"/><rect x="413.02" y="7.8" width="11.100" height="18.2" fill="#d8a139"/><rect x="429.94" y="6.6" width="11.100" height="19.4" fill="#47982f"/><rect x="446.86" y="5.8" width="11.100" height="20.2" fill="#47982f"/><rect x="463.78" y="6.2" width="11.100" height="19.8" fill="#47982f"/><rect x="480.70" y="5.4" width="11.100" height="20.6" fill="#47982f"/></svg>
<div class="abs" style="left:508.800px;top:571.6px;width:40.7px;height:11px;border-radius:6px;background:#b8d6a6"></div>
<div class="abs" style="left:512.800px;top:574.9px;width:4.600px;height:4.600px;border-radius:50%;background:#2a5418"></div>
<div class="t" style="top:567px;font-size:9.3px;left:519.6px;transform-origin:0 50%;transform:scaleX(0.809);color:#1f3d12;">Healthy</div>
<div class="t" style="top:566px;font-size:11.4px;left:608.2px;transform-origin:0 50%;transform:scaleX(0.994);color:#3f7c8c;">2</div>
<div class="t" style="top:566px;font-size:11.4px;left:714.0px;transform-origin:0 50%;transform:scaleX(0.983);color:#1f1f1f;">2025-06-02</div>
<div class="t" style="top:566px;font-size:11.4px;left:808.6px;transform-origin:0 50%;transform:scaleX(0.983);color:#1f1f1f;">2025-12-31</div>
<div class="row g" style="top:592.4px"></div>
<svg class="abs" style="left:79px;top:593.8px" width="34" height="29.700" viewBox="0 0 32 28">
<rect x="1" y="11.300" width="30" height="4.200" fill="#dfe2e5"/>
<path d="M1.500 12.400h3M1.500 14.300h3M27.500 12.400h3M27.500 14.300h3" stroke="#9aa0a6" stroke-width=".8" stroke-dasharray="1 .6"/>
<path d="M4 12.500A12.300 11.800 0 0 1 26.600 8.800" fill="none" stroke="#5b9fd2" stroke-width="3"/>
<path d="M29.300 5.200l-.4 7.300-6-3.600z" fill="#4a8bc4"/>
<path d="M28 15.800A12.300 11.800 0 0 1 5.400 19.500" fill="none" stroke="#b32a3c" stroke-width="3"/>
<path d="M2.700 23l.4-7.300 6 3.600z" fill="#a22333"/>
<path d="M16 14.200l6.700-2.700v7.200L16 21.800l-6.700-3.100v-7.200z" fill="#e6bf45"/>
<path d="M16 14.200l6.700-2.700v7.200L16 21.800z" fill="#d9a93a"/>
<path d="M16 6.800l7 3.700-7 3.900-7-3.900z" fill="#f2e9a8"/>
<path d="M12.200 9l2 1.100M16 7.600l2.200 1.200M18.800 10l2 1.100M13.800 11.600l2.200 1.200M10.500 11.700l1.500 2.300M21.500 11.700l-1.500 2.300" stroke="#1a1a12" stroke-width="1.500"/>
</svg>
<div class="t" style="top:598px;font-size:11.4px;left:124.9px;transform-origin:0 50%;transform:scaleX(0.872);color:#3f7c8c;">Boxeo Cana...</div>
<div class="t" style="top:598px;font-size:11.4px;left:212.5px;transform-origin:0 50%;transform:scaleX(0.983);color:#1f1f1f;">$4M</div>
<div class="abs" style="left:301.600px;top:603.6px;width:23px;height:11px;border-radius:6px;background:#5f9a3f"></div>
<div class="abs" style="left:305.500px;top:606.9px;width:4.600px;height:4.600px;border-radius:50%;background:#2a5418"></div>
<div class="t" style="top:599px;font-size:8.8px;left:311.8px;transform-origin:0 50%;color:#fff;-webkit-text-stroke:.35px #fff;">92</div>
<svg class="abs" style="left:394px;top:592.8px" width="101" height="32" viewBox="394 0 101 32"><rect x="395.200" y="25.8" width="98.200" height="1" fill="#b3b5b7"/><rect x="396.10" y="7.6" width="11.100" height="18.4" fill="#d8a139"/><rect x="413.02" y="5.4" width="11.100" height="20.6" fill="#47982f"/><rect x="429.94" y="6.4" width="11.100" height="19.6" fill="#47982f"/><rect x="446.86" y="7.4" width="11.100" height="18.6" fill="#d8a139"/><rect x="463.78" y="6.2" width="11.100" height="19.8" fill="#47982f"/><rect x="480.70" y="5.6" width="11.100" height="20.4" fill="#47982f"/></svg>
<div class="abs" style="left:508.800px;top:603.6px;width:40.7px;height:11px;border-radius:6px;background:#b8d6a6"></div>
<div class="abs" style="left:512.800px;top:606.9px;width:4.600px;height:4.600px;border-radius:50%;background:#2a5418"></div>
<div class="t" style="top:599px;font-size:9.3px;left:519.6px;transform-origin:0 50%;transform:scaleX(0.809);color:#1f3d12;">Healthy</div>
<div class="t" style="top:598px;font-size:11.4px;left:608.2px;transform-origin:0 50%;transform:scaleX(0.994);color:#3f7c8c;">2</div>
<div class="t" style="top:598px;font-size:11.4px;left:714.0px;transform-origin:0 50%;transform:scaleX(0.983);color:#1f1f1f;">2025-06-13</div>
<div class="t" style="top:598px;font-size:11.4px;left:808.6px;transform-origin:0 50%;transform:scaleX(0.983);color:#1f1f1f;">2025-12-31</div>
<div class="row" style="top:624.4px"></div>
<svg class="abs" style="left:79px;top:625.8px" width="34" height="29.700" viewBox="0 0 32 28">
<rect x="1" y="11.300" width="30" height="4.200" fill="#dfe2e5"/>
<path d="M1.500 12.400h3M1.500 14.300h3M27.500 12.400h3M27.500 14.300h3" stroke="#9aa0a6" stroke-width=".8" stroke-dasharray="1 .6"/>
<path d="M4 12.500A12.300 11.800 0 0 1 26.600 8.800" fill="none" stroke="#5b9fd2" stroke-width="3"/>
<path d="M29.300 5.200l-.4 7.300-6-3.600z" fill="#4a8bc4"/>
<path d="M28 15.800A12.300 11.800 0 0 1 5.400 19.500" fill="none" stroke="#b32a3c" stroke-width="3"/>
<path d="M2.700 23l.4-7.300 6 3.600z" fill="#a22333"/>
<path d="M16 14.200l6.700-2.700v7.200L16 21.800l-6.700-3.100v-7.200z" fill="#e6bf45"/>
<path d="M16 14.200l6.700-2.700v7.200L16 21.800z" fill="#d9a93a"/>
<path d="M16 6.800l7 3.700-7 3.900-7-3.900z" fill="#f2e9a8"/>
<path d="M12.200 9l2 1.100M16 7.600l2.200 1.200M18.800 10l2 1.100M13.800 11.600l2.200 1.200M10.500 11.700l1.500 2.300M21.500 11.700l-1.500 2.300" stroke="#1a1a12" stroke-width="1.500"/>
</svg>
<div class="t" style="top:630px;font-size:11.4px;left:124.9px;transform-origin:0 50%;transform:scaleX(0.887);color:#3f7c8c;">Boxeo EMEA...</div>
<div class="t" style="top:630px;font-size:11.4px;left:212.5px;transform-origin:0 50%;transform:scaleX(0.983);color:#1f1f1f;">$4M</div>
<div class="abs" style="left:301.600px;top:635.6px;width:23px;height:11px;border-radius:6px;background:#5f9a3f"></div>
<div class="abs" style="left:305.500px;top:638.9px;width:4.600px;height:4.600px;border-radius:50%;background:#2a5418"></div>
<div class="t" style="top:631px;font-size:8.8px;left:311.8px;transform-origin:0 50%;color:#fff;-webkit-text-stroke:.35px #fff;">90</div>
<svg class="abs" style="left:394px;top:624.8px" width="101" height="32" viewBox="394 0 101 32"><rect x="395.200" y="25.8" width="98.200" height="1" fill="#b3b5b7"/><rect x="396.10" y="7.4" width="11.100" height="18.6" fill="#d8a139"/><rect x="413.02" y="5.6" width="11.100" height="20.4" fill="#47982f"/><rect x="429.94" y="5.6" width="11.100" height="20.4" fill="#47982f"/><rect x="446.86" y="6.6" width="11.100" height="19.4" fill="#47982f"/><rect x="463.78" y="5.8" width="11.100" height="20.2" fill="#47982f"/><rect x="480.70" y="7.2" width="11.100" height="18.8" fill="#d8a139"/></svg>
<div class="abs" style="left:508.800px;top:635.6px;width:40.7px;height:11px;border-radius:6px;background:#b8d6a6"></div>
<div class="abs" style="left:512.800px;top:638.9px;width:4.600px;height:4.600px;border-radius:50%;background:#2a5418"></div>
<div class="t" style="top:631px;font-size:9.3px;left:519.6px;transform-origin:0 50%;transform:scaleX(0.809);color:#1f3d12;">Healthy</div>
<div class="t" style="top:630px;font-size:11.4px;left:608.2px;transform-origin:0 50%;transform:scaleX(0.994);color:#3f7c8c;">2</div>
<div class="t" style="top:630px;font-size:11.4px;left:714.0px;transform-origin:0 50%;transform:scaleX(0.983);color:#1f1f1f;">2025-06-13</div>
<div class="t" style="top:630px;font-size:11.4px;left:808.6px;transform-origin:0 50%;transform:scaleX(0.983);color:#1f1f1f;">2025-08-22</div>
<div class="row g" style="top:656.4px"></div>
<svg class="abs" style="left:82px;top:658.8px" width="28" height="28" viewBox="0 0 28 28"><clipPath id="dgc"><ellipse cx="14" cy="14" rx="13.500" ry="12.500"/></clipPath><g stroke="#555" stroke-width="1" clip-path="url(#dgc)"><path d="M-10 28L8 0"/><path d="M-7 28L11 0"/><path d="M-4 28L14 0"/><path d="M-1 28L17 0"/><path d="M2 28L20 0"/><path d="M5 28L23 0"/><path d="M8 28L26 0"/><path d="M11 28L29 0"/><path d="M14 28L32 0"/><path d="M17 28L35 0"/><path d="M20 28L38 0"/><path d="M23 28L41 0"/></g></svg>
<div class="t" style="top:662px;font-size:11.4px;left:124.9px;transform-origin:0 50%;transform:scaleX(0.884);color:#3f7c8c;">Diagonal I...</div>
<div class="t" style="top:662px;font-size:11.4px;left:212.5px;transform-origin:0 50%;transform:scaleX(0.983);color:#1f1f1f;">$3M</div>
<div class="abs" style="left:301.600px;top:667.6px;width:23px;height:11px;border-radius:6px;background:#8a8a3c"></div>
<div class="abs" style="left:305.500px;top:670.9px;width:4.600px;height:4.600px;border-radius:50%;background:#4a4a18"></div>
<div class="t" style="top:663px;font-size:8.8px;left:311.8px;transform-origin:0 50%;color:#fff;-webkit-text-stroke:.35px #fff;">83</div>
<svg class="abs" style="left:394px;top:656.8px" width="101" height="32" viewBox="394 0 101 32"><rect x="395.200" y="25.8" width="98.200" height="1" fill="#b3b5b7"/><rect x="396.10" y="6.4" width="11.100" height="19.6" fill="#47982f"/><rect x="413.02" y="6.6" width="11.100" height="19.4" fill="#47982f"/><rect x="429.94" y="8.0" width="11.100" height="18" fill="#d8a139"/><rect x="446.86" y="8.0" width="11.100" height="18" fill="#d8a139"/><rect x="463.78" y="7.8" width="11.100" height="18.2" fill="#d8a139"/><rect x="480.70" y="8.0" width="11.100" height="18" fill="#d8a139"/></svg>
<div class="abs" style="left:508.800px;top:667.6px;width:40.7px;height:11px;border-radius:6px;background:#b8d6a6"></div>
<div class="abs" style="left:512.800px;top:670.9px;width:4.600px;height:4.600px;border-radius:50%;background:#2a5418"></div>
<div class="t" style="top:663px;font-size:9.3px;left:519.6px;transform-origin:0 50%;transform:scaleX(0.809);color:#1f3d12;">Healthy</div>
<div class="t" style="top:662px;font-size:11.4px;left:608.2px;transform-origin:0 50%;transform:scaleX(0.994);color:#3f7c8c;">2</div>
<div class="t" style="top:662px;font-size:11.4px;left:714.0px;transform-origin:0 50%;transform:scaleX(0.983);color:#1f1f1f;">2025-06-13</div>
<div class="t" style="top:662px;font-size:11.4px;left:808.6px;transform-origin:0 50%;transform:scaleX(0.983);color:#1f1f1f;">2025-07-30</div>
<div class="row" style="top:688.4px"></div>
<svg class="abs" style="left:80px;top:690.6px" width="32" height="28" viewBox="0 0 32 30" preserveAspectRatio="none">
<circle cx="21.300" cy="10.800" r="9.200" fill="none" stroke="#e8d276" stroke-width="2"/>
<path d="M10.800 10.800h9.800v9.300a9.300 8.800 0 1 1-9.800-9.300z" fill="none" stroke="#3b689e" stroke-width="2"/>
<path d="M12.200 11v9h8.200" fill="none" stroke="#e8d276" stroke-width="2"/>
</svg>
<div class="t" style="top:694px;font-size:11.4px;left:124.9px;transform-origin:0 50%;transform:scaleX(0.875);color:#3f7c8c;">Elegant Co...</div>
<div class="t" style="top:694px;font-size:11.4px;left:212.5px;transform-origin:0 50%;transform:scaleX(0.983);color:#1f1f1f;">$2M</div>
<div class="abs" style="left:301.600px;top:699.6px;width:23px;height:11px;border-radius:6px;background:#8a8a3c"></div>
<div class="abs" style="left:305.500px;top:702.9px;width:4.600px;height:4.600px;border-radius:50%;background:#4a4a18"></div>
<div class="t" style="top:695px;font-size:8.8px;left:311.8px;transform-origin:0 50%;color:#fff;-webkit-text-stroke:.35px #fff;">82</div>
<svg class="abs" style="left:394px;top:688.8px" width="101" height="32" viewBox="394 0 101 32"><rect x="395.200" y="25.8" width="98.200" height="1" fill="#b3b5b7"/><rect x="396.10" y="5.4" width="11.100" height="20.6" fill="#47982f"/><rect x="413.02" y="7.6" width="11.100" height="18.4" fill="#d8a139"/><rect x="429.94" y="6.0" width="11.100" height="20" fill="#47982f"/><rect x="446.86" y="7.6" width="11.100" height="18.4" fill="#d8a139"/><rect x="463.78" y="7.8" width="11.100" height="18.2" fill="#d8a139"/><rect x="480.70" y="7.8" width="11.100" height="18.2" fill="#d8a139"/></svg>
<div class="abs" style="left:508.800px;top:699.6px;width:42.8px;height:11px;border-radius:6px;background:#d3d06c"></div>
<div class="abs" style="left:512.800px;top:702.9px;width:4.600px;height:4.600px;border-radius:50%;background:#55551a"></div>
<div class="t" style="top:695px;font-size:9.3px;left:519.6px;transform-origin:0 50%;transform:scaleX(0.805);color:#2e2e10;">Warning</div>
<div class="t" style="top:694px;font-size:11.4px;left:608.2px;transform-origin:0 50%;transform:scaleX(0.994);color:#3f7c8c;">2</div>
<div class="t" style="top:694px;font-size:11.4px;left:714.0px;transform-origin:0 50%;transform:scaleX(0.983);color:#1f1f1f;">2025-06-02</div>
<div class="t" style="top:694px;font-size:11.4px;left:808.6px;transform-origin:0 50%;transform:scaleX(0.983);color:#1f1f1f;">2025-12-31</div>
<!-- ============ MY WORK PANEL ============ -->
<div class="abs" id="rp" style="left:923px;top:95px;width:357px;height:481px;background:#f4f5f6"></div>
<div class="t" style="top:111px;font-size:13.4px;left:940.4px;transform-origin:0 50%;transform:scaleX(0.984);font-weight:bold;color:#1f1f1f;">My Work</div>
<div class="t" style="top:135px;font-size:8.9px;left:940.4px;transform-origin:0 50%;transform:scaleX(0.980);color:#2a2a2a;">Sorted by priority and engagement health</div>
<div class="rcard" style="top:161px;height:264px"></div>
<div class="t" style="top:167px;font-size:11.5px;left:948.9px;transform-origin:0 50%;transform:scaleX(0.923);color:#2e2e2e;">Due today</div>
<svg class="abs" style="left:953.500px;top:201.500px" width="9" height="8" viewBox="0 0 9 8" fill="#4a4a4a"><circle cx="2" cy="2.300" r="1.300"/><circle cx="4.500" cy="1.900" r="1.500"/><circle cx="7" cy="2.300" r="1.300"/><path d="M.3 7.300V5.200c0-.9.700-1.500 1.700-1.500h5c1 0 1.700.6 1.700 1.500v2.100z"/></svg>
<div class="t" style="top:196px;font-size:8.6px;left:964.4px;transform-origin:0 50%;transform:scaleX(0.921);color:#5a5a5a;">Touchpoint</div>
<div class="t" style="top:218px;font-size:11.6px;left:954.4px;transform-origin:0 50%;transform:scaleX(0.869);font-weight:bold;color:#242424;-webkit-text-stroke:.35px #fff;">Performance Optimization Review</div>
<div class="t" style="top:232px;font-size:8.7px;left:954.4px;transform-origin:0 50%;transform:scaleX(0.916);color:#2a2a2a;">Review system performance and tuning</div>
<div class="t" style="top:260px;font-size:8.8px;left:955.6px;transform-origin:0 50%;transform:scaleX(0.892);color:#444;">Due</div>
<div class="t" style="top:260px;font-size:8.8px;left:974.4px;transform-origin:0 50%;transform:scaleX(0.949);color:#444;">2025-06-20</div>
<div class="abs" style="left:954px;top:283.800px;width:15px;height:10px;border-radius:5px;background:#78b45a"></div>
<div class="t" style="top:280px;font-size:7.8px;left:957.2px;transform-origin:0 50%;transform:scaleX(0.991);font-weight:bold;color:#fff;">99</div>
<div class="t" style="top:279px;font-size:9.6px;left:974.0px;transform-origin:0 50%;transform:scaleX(0.892);color:#4a66b3;">Genixify PRO-PLUS Engagement</div>
<div class="abs" style="left:943px;top:304.500px;width:311px;height:1px;background:#e3e5e7"></div>
<svg class="abs" style="left:953.500px;top:316px" width="9" height="9" viewBox="0 0 9 9" fill="none" stroke="#4a4a4a" stroke-width=".9" stroke-linejoin="round"><path d="M4.500 1L8.300 8H.7z"/><path d="M4.500 3.600v2.200M4.500 6.700v.3"/></svg>
<div class="t" style="top:311px;font-size:8.6px;left:964.4px;transform-origin:0 50%;transform:scaleX(0.860);color:#5a5a5a;">Risk and Issue</div>
<div class="t" style="top:332px;font-size:11.8px;left:954.4px;transform-origin:0 50%;transform:scaleX(0.820);font-weight:bold;color:#242424;-webkit-text-stroke:.35px #fff;">SLA Achievement</div>
<div class="t" style="top:347px;font-size:8.7px;left:954.4px;transform-origin:0 50%;transform:scaleX(0.895);color:#2a2a2a;">SLA target is 90%, current is 82%</div>
<div class="t" style="top:374px;font-size:8.8px;left:955.6px;transform-origin:0 50%;transform:scaleX(0.892);color:#444;">Due</div>
<div class="t" style="top:374px;font-size:8.8px;left:974.4px;transform-origin:0 50%;transform:scaleX(0.949);color:#444;">2025-06-20</div>
<div class="abs" style="left:954px;top:398.300px;width:15px;height:10px;border-radius:5px;background:#8f8f45"></div>
<div class="t" style="top:394px;font-size:7.8px;left:957.2px;transform-origin:0 50%;transform:scaleX(0.991);font-weight:bold;color:#fff;">90</div>
<div class="t" style="top:393px;font-size:9.6px;left:974.0px;transform-origin:0 50%;transform:scaleX(0.915);color:#4a66b3;">Boxeo EMEA Engagement</div>
<div class="rcard" style="top:437.1px;height:34.5px"></div>
<div class="t" style="top:443px;font-size:11.5px;left:948.9px;transform-origin:0 50%;transform:scaleX(0.910);color:#2e2e2e;">Created this week</div>
<div class="abs" style="left:1207.300px;top:449.8px;width:22.700px;height:10px;border-radius:5px;background:#c9c9c9"></div>
<div class="abs" style="left:1211px;top:452.8px;width:4px;height:4px;border-radius:50%;background:#4a4a4a"></div>
<div class="t" style="top:445px;font-size:8.8px;left:1219.6px;transform-origin:50% 50%;transform:scaleX(0.981);color:#2f2f2f;-webkit-text-stroke:.3px #2f2f2f;">8</div>
<svg class="abs" style="left:1236.500px;top:452.2px" width="9" height="6" viewBox="0 0 9 6" fill="none" stroke="#4a4a4a" stroke-width="1"><path d="M.8 1l3.700 3.800L8.200 1"/></svg>
<div class="rcard" style="top:483.5px;height:34.7px"></div>
<div class="t" style="top:489px;font-size:11.5px;left:948.9px;transform-origin:0 50%;transform:scaleX(0.916);color:#2e2e2e;">Overdue</div>
<div class="abs" style="left:1207.300px;top:496.2px;width:22.700px;height:10px;border-radius:5px;background:#c9c9c9"></div>
<div class="abs" style="left:1211px;top:499.2px;width:4px;height:4px;border-radius:50%;background:#4a4a4a"></div>
<div class="t" style="top:491px;font-size:8.8px;left:1217.1px;transform-origin:50% 50%;transform:scaleX(0.981);color:#2f2f2f;-webkit-text-stroke:.3px #2f2f2f;">14</div>
<svg class="abs" style="left:1236.500px;top:498.8px" width="9" height="6" viewBox="0 0 9 6" fill="none" stroke="#4a4a4a" stroke-width="1"><path d="M.8 1l3.700 3.800L8.200 1"/></svg>
<div class="rcard" style="top:530.4px;height:34.5px"></div>
<div class="t" style="top:536px;font-size:11.5px;left:948.9px;transform-origin:0 50%;transform:scaleX(0.912);color:#2e2e2e;">Due in next 14 days</div>
<div class="abs" style="left:1207.300px;top:543.0px;width:22.700px;height:10px;border-radius:5px;background:#c9c9c9"></div>
<div class="abs" style="left:1211px;top:546.0px;width:4px;height:4px;border-radius:50%;background:#4a4a4a"></div>
<div class="t" style="top:538px;font-size:8.8px;left:1217.1px;transform-origin:50% 50%;transform:scaleX(0.981);color:#2f2f2f;-webkit-text-stroke:.3px #2f2f2f;">27</div>
<svg class="abs" style="left:1236.500px;top:545.5px" width="9" height="6" viewBox="0 0 9 6" fill="none" stroke="#4a4a4a" stroke-width="1"><path d="M.8 1l3.700 3.800L8.200 1"/></svg>
<!-- ============ AI CHAT PANEL ============ -->
<div class="abs" style="left:1140.300px;top:28px;width:10.500px;height:10.500px;background:#213c4c;transform:rotate(45deg);border:1px solid #8499a5"></div>
<div class="abs" id="chat" style="left:1039px;top:33px;width:212px;height:438.400px;background:#2b4555;border-radius:6px;box-shadow:0 2px 7px rgba(0,0,0,.32),0 0 0 1px #47606f"></div>
<div class="abs" style="left:1138px;top:33.500px;width:15px;height:7px;background:#2b4555"></div>
<div class="t" style="top:42px;font-size:11.3px;left:1050.0px;transform-origin:0 50%;transform:scaleX(0.928);color:#f6f9fa;">Help me with risk and is...</div>
<svg class="abs" style="left:1182.500px;top:47px" width="9" height="9" viewBox="0 0 9 9" stroke="#e8eef2" stroke-width="1"><path d="M4.500 .5v8M.5 4.500h8"/></svg>
<svg class="abs" style="left:1202.500px;top:46.500px" width="11" height="11" viewBox="0 0 11 11" fill="none" stroke="#e8eef2" stroke-width="1"><path d="M1.600 3.200A4.500 4.500 0 1 1 1 5.600"/><path d="M.8 1.200l.7 2.200 2.200-.6"/><path d="M5.500 3.200v2.600l1.600 1"/></svg>
<div class="abs" style="left:1209.500px;top:40px;width:11px;height:11px;border-radius:50%;background:#5aa5dc;color:#fff;font-size:7.500px;line-height:11px;text-align:center">1</div>
<svg class="abs" style="left:1225px;top:46.500px" width="9" height="11" viewBox="0 0 9 11" fill="none" stroke="#e8eef2" stroke-width=".9" stroke-linejoin="round"><path d="M2.200 1h4.600M2.900 1v2.700L1.500 6.200h6L6.100 3.700V1M4.500 6.200v3.600"/></svg>
<div class="abs" style="left:1050.300px;top:64px;width:190px;height:1px;background:#4d6878"></div>
<div class="t" style="top:60px;font-size:8px;left:1056.5px;transform-origin:0 50%;color:#c9d4da;">,</div>
<div class="abs" style="left:1051.200px;top:80.100px;width:188.800px;height:221.500px;border-radius:7px;background:#3a5363"></div>
<div class="t" style="top:82px;font-size:11.2px;left:1058.7px;transform-origin:0 50%;transform:scaleX(0.934);color:#f6f9fa;">The system has found a solution for</div>
<div class="t" style="top:95px;font-size:11.2px;left:1058.7px;transform-origin:0 50%;transform:scaleX(0.934);color:#f6f9fa;">the selected risk:</div>
<div class="t" style="top:122px;font-size:11.2px;left:1058.7px;transform-origin:0 50%;transform:scaleX(0.915);color:#f6f9fa;">Solution Name: Enable Business</div>
<div class="t" style="top:135px;font-size:11.2px;left:1058.7px;transform-origin:0 50%;transform:scaleX(0.939);color:#f6f9fa;">Velocity (AI Agent)</div>
<div class="t" style="top:148px;font-size:11.2px;left:1058.7px;transform-origin:0 50%;transform:scaleX(0.955);color:#f6f9fa;">Description: Optimize digital</div>
<div class="t" style="top:162px;font-size:11.2px;left:1058.7px;transform-origin:0 50%;transform:scaleX(0.953);color:#f6f9fa;">technology products to</div>
<div class="t" style="top:175px;font-size:11.2px;left:1058.7px;transform-origin:0 50%;transform:scaleX(0.941);color:#f6f9fa;">fundamentally change how the</div>
<div class="t" style="top:188px;font-size:11.2px;left:1058.7px;transform-origin:0 50%;transform:scaleX(0.906);color:#f6f9fa;">business works and deliver value.</div>
<div class="t" style="top:215px;font-size:11.2px;left:1058.7px;transform-origin:0 50%;transform:scaleX(0.944);color:#f6f9fa;">Please confirm if you would like to</div>
<div class="t" style="top:228px;font-size:11.2px;left:1058.7px;transform-origin:0 50%;transform:scaleX(0.958);color:#f6f9fa;">proceed with this solution.</div>
<div class="abs" style="left:1058.700px;top:252.700px;width:173.200px;height:1px;background:#5a7383"></div>
<div class="t" style="top:262px;font-size:8.3px;left:1063.9px;transform-origin:0 50%;transform:scaleX(0.855);font-weight:bold;color:#f6f9fa;">Sources</div>
<svg class="abs" style="left:1216.700px;top:270px" width="9" height="6" viewBox="0 0 9 6" fill="none" stroke="#c9d6dd" stroke-width="1"><path d="M.8 1l3.700 3.800L8.200 1"/></svg>
<div class="t" style="top:287px;font-size:8.6px;left:1050.7px;transform-origin:0 50%;transform:scaleX(0.907);color:#f6f9fa;text-decoration:underline;text-underline-offset:1px;">View less</div>
<div class="t" style="top:306px;font-size:8.6px;left:1128.3px;transform-origin:50% 50%;transform:scaleX(0.910);color:#f6f9fa;">Just now</div>
<div class="abs" style="left:1207.900px;top:330.500px;width:32.200px;height:23.600px;border-radius:8px 8px 0 8px;background:#3f88a5"></div>
<div class="t" style="top:332px;font-size:11.3px;left:1216.9px;transform-origin:0 50%;transform:scaleX(0.814);color:#f3f8fa;">Yes</div>
<div class="abs" style="left:1245.300px;top:352.700px;width:4px;height:69px;border-radius:2px;background:#5a7383"></div>
<svg class="abs" style="left:1051px;top:363px" width="16" height="16" viewBox="0 0 16 16" fill="#bcd6e2"><path d="M6.500 3.500c.5 3.200 1.600 4.300 4.800 4.800-3.200.5-4.300 1.600-4.800 4.800-.5-3.200-1.600-4.300-4.800-4.800 3.200-.5 4.300-1.600 4.800-4.800z"/><path d="M12.300 1.200c.2 1.500.8 2.100 2.300 2.300-1.500.2-2.100.8-2.300 2.300-.2-1.500-.8-2.100-2.300-2.300 1.500-.2 2.100-.8 2.300-2.300z"/></svg>
<div class="t" style="top:367px;font-size:8.7px;left:1096.2px;transform-origin:0 50%;transform:scaleX(0.900);color:#f6f9fa;">Planning the next steps</div>
<svg class="abs" style="left:1224.500px;top:372.500px" width="7" height="5" viewBox="0 0 7 5" fill="none" stroke="#e8eef2" stroke-width="1"><path d="M.7 4l2.800-2.900L6.300 4"/></svg>
<svg class="abs" style="left:1095.700px;top:387.300px" width="10" height="10" viewBox="0 0 10 10" fill="none" stroke="#4d8ea8" stroke-width=".9"><circle cx="5" cy="5" r="4.300"/><path d="M3 5.200l1.500 1.500 3-3.200"/></svg>
<div class="t" style="top:382px;font-size:8.7px;left:1109.5px;transform-origin:0 50%;transform:scaleX(0.906);color:#f6f9fa;">Analyzing inputs needed from</div>
<div class="t" style="top:392px;font-size:8.7px;left:1109.5px;transform-origin:0 50%;transform:scaleX(0.857);color:#f6f9fa;">user...</div>
<div class="abs" style="left:1039.200px;top:394.500px;width:33px;height:33px;border-radius:50%;background:#6cb24c"></div>
<div class="abs" style="left:1050px;top:434px;width:190.700px;height:26.500px;border-radius:5px;background:#162d3b;border:1px solid #617c8c"></div>
<svg class="abs" style="left:1221.500px;top:442.500px" width="10" height="10" viewBox="0 0 10 10"><path d="M.8 .8L9.500 5 .8 9.200 2.300 5z" fill="#f1f5f7"/><path d="M2.300 5H6" stroke="#162d3b" stroke-width=".8"/></svg>
<!-- ============ CAPTION OVERLAY + FRAME EDGES ============ -->
<div class="abs" id="ovl" style="left:34px;top:633px;width:1245px;height:55px;border-radius:13px;background:rgba(8,8,8,.8)"></div>
<svg class="abs" style="left:0;top:716px" width="4" height="4" viewBox="0 0 4 4"><path d="M0 0v4h4A4 4 0 0 1 0 0z" fill="#0a0f0a"/></svg>
<svg class="abs" style="left:1276px;top:716px" width="4" height="4" viewBox="0 0 4 4"><path d="M4 0v4H0A4 4 0 0 0 4 0z" fill="#111"/></svg>
</div>
</body>
</html>
